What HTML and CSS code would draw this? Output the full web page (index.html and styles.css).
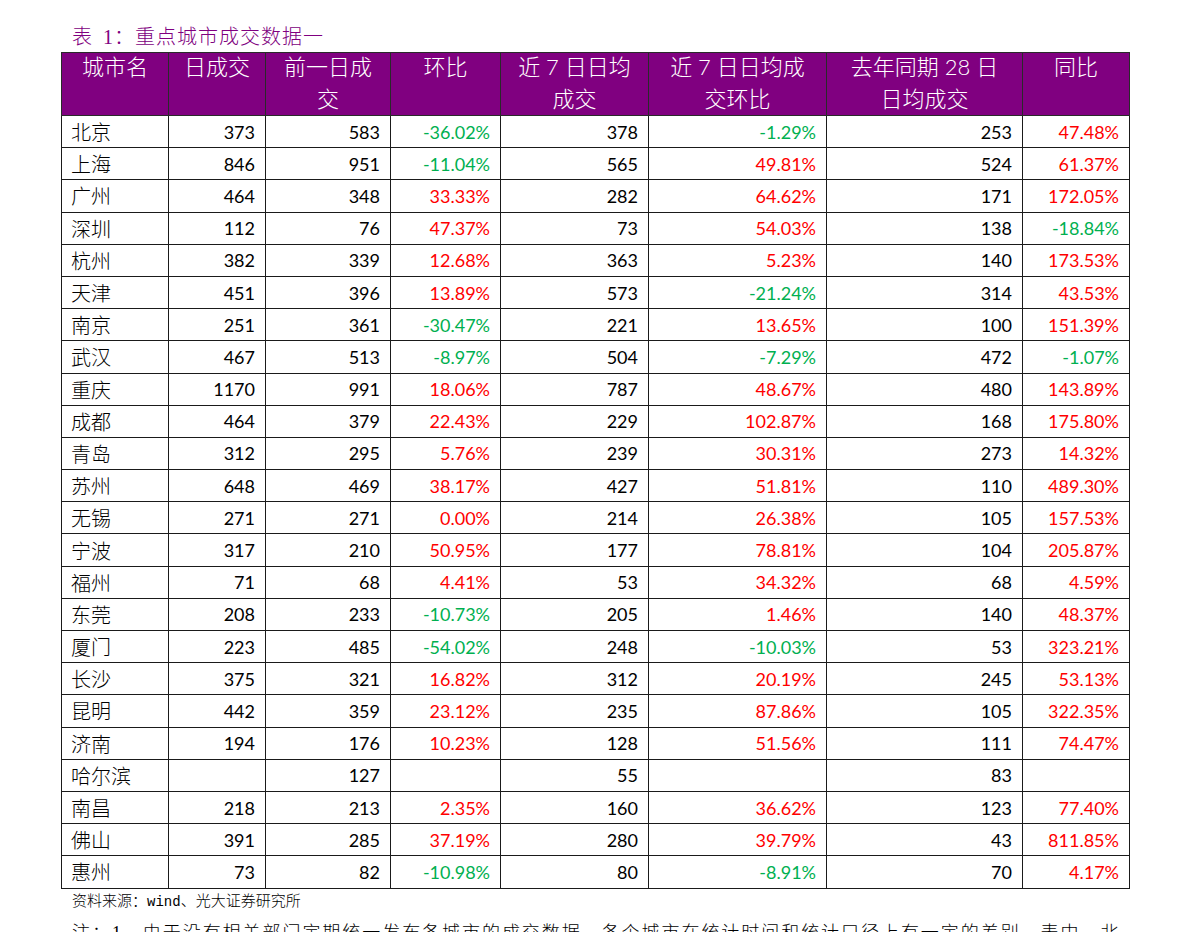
FILE: index.html
```html
<!DOCTYPE html>
<html lang="zh-CN">
<head>
<meta charset="utf-8">
<title>表 1：重点城市成交数据一</title>
<link rel="stylesheet" href="styles.css">
</head>
<body>
<div class="page">
  <div class="title">表 1：重点城市成交数据一</div>
  <table class="grid">
    <colgroup>
      <col class="c1"><col class="c2"><col class="c3"><col class="c4"><col class="c5"><col class="c6"><col class="c7"><col class="c8">
    </colgroup>
    <thead>
      <tr>
        <th><div class="hd">城市名</div></th>
        <th><div class="hd">日成交</div></th>
        <th><div class="hd">前一日成<br>交</div></th>
        <th><div class="hd">环比</div></th>
        <th><div class="hd">近 7 日日均<br>成交</div></th>
        <th><div class="hd">近 7 日日均成<br>交环比</div></th>
        <th><div class="hd">去年同期 28 日<br>日均成交</div></th>
        <th><div class="hd">同比</div></th>
      </tr>
    </thead>
    <tbody>
      <tr><td class="city">北京</td><td class="num">373</td><td class="num">583</td><td class="num dn">-36.02%</td><td class="num">378</td><td class="num dn">-1.29%</td><td class="num">253</td><td class="num up">47.48%</td></tr>
      <tr><td class="city">上海</td><td class="num">846</td><td class="num">951</td><td class="num dn">-11.04%</td><td class="num">565</td><td class="num up">49.81%</td><td class="num">524</td><td class="num up">61.37%</td></tr>
      <tr><td class="city">广州</td><td class="num">464</td><td class="num">348</td><td class="num up">33.33%</td><td class="num">282</td><td class="num up">64.62%</td><td class="num">171</td><td class="num up">172.05%</td></tr>
      <tr><td class="city">深圳</td><td class="num">112</td><td class="num">76</td><td class="num up">47.37%</td><td class="num">73</td><td class="num up">54.03%</td><td class="num">138</td><td class="num dn">-18.84%</td></tr>
      <tr><td class="city">杭州</td><td class="num">382</td><td class="num">339</td><td class="num up">12.68%</td><td class="num">363</td><td class="num up">5.23%</td><td class="num">140</td><td class="num up">173.53%</td></tr>
      <tr><td class="city">天津</td><td class="num">451</td><td class="num">396</td><td class="num up">13.89%</td><td class="num">573</td><td class="num dn">-21.24%</td><td class="num">314</td><td class="num up">43.53%</td></tr>
      <tr><td class="city">南京</td><td class="num">251</td><td class="num">361</td><td class="num dn">-30.47%</td><td class="num">221</td><td class="num up">13.65%</td><td class="num">100</td><td class="num up">151.39%</td></tr>
      <tr><td class="city">武汉</td><td class="num">467</td><td class="num">513</td><td class="num dn">-8.97%</td><td class="num">504</td><td class="num dn">-7.29%</td><td class="num">472</td><td class="num dn">-1.07%</td></tr>
      <tr><td class="city">重庆</td><td class="num">1170</td><td class="num">991</td><td class="num up">18.06%</td><td class="num">787</td><td class="num up">48.67%</td><td class="num">480</td><td class="num up">143.89%</td></tr>
      <tr><td class="city">成都</td><td class="num">464</td><td class="num">379</td><td class="num up">22.43%</td><td class="num">229</td><td class="num up">102.87%</td><td class="num">168</td><td class="num up">175.80%</td></tr>
      <tr><td class="city">青岛</td><td class="num">312</td><td class="num">295</td><td class="num up">5.76%</td><td class="num">239</td><td class="num up">30.31%</td><td class="num">273</td><td class="num up">14.32%</td></tr>
      <tr><td class="city">苏州</td><td class="num">648</td><td class="num">469</td><td class="num up">38.17%</td><td class="num">427</td><td class="num up">51.81%</td><td class="num">110</td><td class="num up">489.30%</td></tr>
      <tr><td class="city">无锡</td><td class="num">271</td><td class="num">271</td><td class="num up">0.00%</td><td class="num">214</td><td class="num up">26.38%</td><td class="num">105</td><td class="num up">157.53%</td></tr>
      <tr><td class="city">宁波</td><td class="num">317</td><td class="num">210</td><td class="num up">50.95%</td><td class="num">177</td><td class="num up">78.81%</td><td class="num">104</td><td class="num up">205.87%</td></tr>
      <tr><td class="city">福州</td><td class="num">71</td><td class="num">68</td><td class="num up">4.41%</td><td class="num">53</td><td class="num up">34.32%</td><td class="num">68</td><td class="num up">4.59%</td></tr>
      <tr><td class="city">东莞</td><td class="num">208</td><td class="num">233</td><td class="num dn">-10.73%</td><td class="num">205</td><td class="num up">1.46%</td><td class="num">140</td><td class="num up">48.37%</td></tr>
      <tr><td class="city">厦门</td><td class="num">223</td><td class="num">485</td><td class="num dn">-54.02%</td><td class="num">248</td><td class="num dn">-10.03%</td><td class="num">53</td><td class="num up">323.21%</td></tr>
      <tr><td class="city">长沙</td><td class="num">375</td><td class="num">321</td><td class="num up">16.82%</td><td class="num">312</td><td class="num up">20.19%</td><td class="num">245</td><td class="num up">53.13%</td></tr>
      <tr><td class="city">昆明</td><td class="num">442</td><td class="num">359</td><td class="num up">23.12%</td><td class="num">235</td><td class="num up">87.86%</td><td class="num">105</td><td class="num up">322.35%</td></tr>
      <tr><td class="city">济南</td><td class="num">194</td><td class="num">176</td><td class="num up">10.23%</td><td class="num">128</td><td class="num up">51.56%</td><td class="num">111</td><td class="num up">74.47%</td></tr>
      <tr><td class="city">哈尔滨</td><td class="num"></td><td class="num">127</td><td class="num"></td><td class="num">55</td><td class="num"></td><td class="num">83</td><td class="num"></td></tr>
      <tr><td class="city">南昌</td><td class="num">218</td><td class="num">213</td><td class="num up">2.35%</td><td class="num">160</td><td class="num up">36.62%</td><td class="num">123</td><td class="num up">77.40%</td></tr>
      <tr><td class="city">佛山</td><td class="num">391</td><td class="num">285</td><td class="num up">37.19%</td><td class="num">280</td><td class="num up">39.79%</td><td class="num">43</td><td class="num up">811.85%</td></tr>
      <tr><td class="city">惠州</td><td class="num">73</td><td class="num">82</td><td class="num dn">-10.98%</td><td class="num">80</td><td class="num dn">-8.91%</td><td class="num">70</td><td class="num up">4.17%</td></tr>
    </tbody>
  </table>
  <div class="source">资料来源：<span class="mono">wind</span>、光大证券研究所</div>
  <div class="note">注：1、由于没有相关部门定期统一发布各城市的成交数据，各个城市在统计时间和统计口径上有一定的差别，表中，北京、上海等城市数据为网签口径。</div>
</div>
</body>
</html>
```

FILE: styles.css
```css
html, body {
  margin: 0;
  padding: 0;
  background: #ffffff;
}

.page {
  padding: 24px 0 0 61px;
  height: 932px;
  box-sizing: border-box;
  overflow: hidden;
}

.title {
  padding-left: 11px;
  font-family: "Liberation Serif", "Noto Sans CJK SC", serif;
  font-weight: 300;
  font-size: 20px;
  line-height: 26px;
  height: 26px;
  margin-bottom: 2px;
  color: #800080;
  letter-spacing: 1px;
  word-spacing: 4px;
}

.grid {
  border-collapse: collapse;
  table-layout: fixed;
  width: 1069px;
}

.c1 { width: 107px; }
.c2 { width: 97px; }
.c3 { width: 125px; }
.c4 { width: 110px; }
.c5 { width: 148px; }
.c6 { width: 178px; }
.c7 { width: 196px; }
.c8 { width: 107px; }

.grid th {
  background: #800080;
  color: #ffffff;
  font-family: "Lato", "Noto Sans CJK SC", sans-serif;
  font-weight: 300;
  font-size: 22px;
  line-height: 32px;
  height: 62px;
  padding: 0;
  text-align: center;
  vertical-align: top;
  border: 1px solid #2a2a2a;
}

.grid th .hd {
  margin-top: -2px;
}

.grid tbody tr {
  height: 32.2px;
}

.grid td {
  padding: 0 10px 0 8px;
  border: 1px solid #1a1a1a;
  font-family: "Lato", "Noto Sans CJK SC", sans-serif;
  font-size: 18px;
  color: #000000;
  white-space: nowrap;
  vertical-align: middle;
}

.grid td.city {
  text-align: left;
  padding-left: 9px;
  font-family: "Noto Sans CJK SC", sans-serif;
  font-weight: 300;
  font-size: 20px;
}

.grid td.num {
  text-align: right;
}

.grid td.up {
  color: #ff0000;
}

.grid td.dn {
  color: #00b050;
}

.source {
  margin-top: 2px;
  padding-left: 11px;
  font-family: "Liberation Serif", "Noto Sans CJK SC", serif;
  font-weight: 300;
  font-size: 15px;
  line-height: 20px;
  color: #000000;
}

.source .mono {
  font-family: "Liberation Mono", monospace;
  font-size: 14px;
}

.note {
  margin-top: 8px;
  padding-left: 11px;
  width: 1060px;
  font-family: "Liberation Serif", "Noto Sans CJK SC", serif;
  font-weight: 300;
  font-size: 18px;
  line-height: 26px;
  letter-spacing: 1.95px;
  color: #000000;
}
```
